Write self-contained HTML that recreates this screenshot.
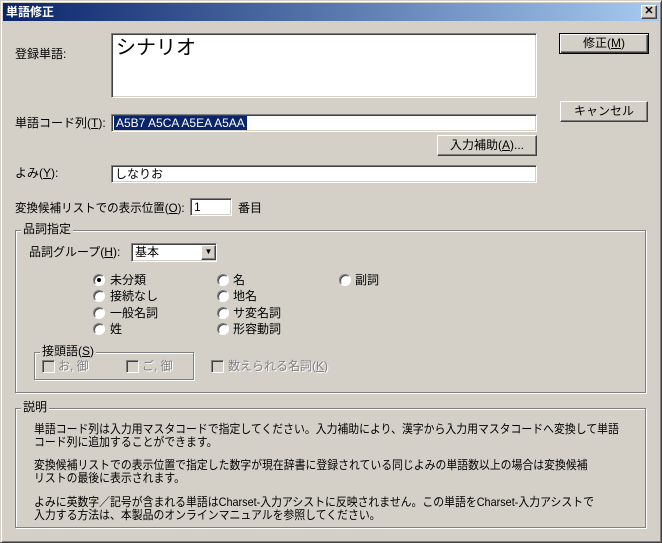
<!DOCTYPE html>
<html><head><meta charset="utf-8"><style>
*{margin:0;padding:0;box-sizing:border-box}
body{width:662px;height:543px;background:#d4d0c8;font:12px "Liberation Sans","Noto Sans CJK JP",sans-serif;color:#000;position:relative;overflow:hidden}
.a{position:absolute;white-space:nowrap;line-height:14px}
.win{position:absolute;left:0;top:0;width:662px;height:543px;border:1px solid;border-color:#d4d0c8 #404040 #404040 #d4d0c8;box-shadow:inset 1px 1px #fff,inset -1px -1px #808080}
.title{position:absolute;left:3px;top:3px;width:656px;height:18px;background:linear-gradient(90deg,#0a246a,#a6caf0);color:#fff;font-weight:bold;padding:2px 3px;line-height:14px}
.sunk{position:absolute;background:#fff;border:1px solid;border-color:#808080 #fff #fff #808080;box-shadow:inset 1px 1px #404040,inset -1px -1px #d4d0c8}
.btn{position:absolute;background:#d4d0c8;border:1px solid;border-color:#fff #404040 #404040 #fff;box-shadow:inset -1px -1px #808080;text-align:center;line-height:18px}
.grp{position:absolute;border:1px solid #808080;box-shadow:1px 1px #fff,inset 1px 1px #fff}
.lg{position:absolute;background:#d4d0c8;padding:0 2px;line-height:13px}
.r{position:absolute;width:12px;height:12px;border-radius:50%;background:#fff;border:1px solid;border-color:#808080 #fff #fff #808080;box-shadow:inset 1px 1px #404040}
.cb{position:absolute;width:13px;height:13px;border:1px solid;border-color:#808080 #fff #fff #808080;box-shadow:inset 1px 1px #404040;background:#d4d0c8}
.g{color:#808080;text-shadow:1px 1px #fff}
.d{transform:scaleX(0.905);transform-origin:0 0}
</style></head><body>
<div class="win"></div>
<div class="title">単語修正</div>
<div class="btn" style="left:641px;top:5px;width:16px;height:14px;line-height:11px;font-weight:bold;font-size:11px">✕</div>

<div class="a" style="left:15px;top:47px">登録単語:</div>
<div class="sunk" style="left:111px;top:33px;width:426px;height:65px"><span class="a" style="left:4px;top:2px;font-size:20px;line-height:24px">シナリオ</span></div>

<div class="btn" style="left:559px;top:33px;width:90px;height:21px;border:1px solid #000;box-shadow:inset 1px 1px #fff,inset -1px -1px #404040,inset -2px -2px #808080">修正(<u>M</u>)</div>
<div class="btn" style="left:560px;top:101px;width:88px;height:21px">キャンセル</div>

<div class="a" style="left:15px;top:116px">単語コード列(<u>T</u>):</div>
<div class="sunk" style="left:111px;top:114px;width:426px;height:18px"><span class="a" style="left:2px;top:1px;background:#0a246a;color:#fff;padding:0 2px">A5B7 A5CA A5EA A5AA</span></div>
<div class="btn" style="left:437px;top:135px;width:100px;height:21px">入力補助(<u>A</u>)...</div>

<div class="a" style="left:15px;top:166px">よみ(<u>Y</u>):</div>
<div class="sunk" style="left:111px;top:165px;width:426px;height:18px"><span class="a" style="left:3px;top:1px">しなりお</span></div>

<div class="a" style="left:15px;top:201px;transform:scaleX(0.96);transform-origin:0 0">変換候補リストでの表示位置(<u>O</u>):</div>
<div class="sunk" style="left:190px;top:198px;width:42px;height:18px"><span class="a" style="left:3px;top:1px">1</span></div>
<div class="a" style="left:238px;top:201px">番目</div>

<div class="grp" style="left:15px;top:230px;width:631px;height:163px"></div>
<div class="lg a" style="left:21px;top:223px">品詞指定</div>
<div class="a" style="left:29px;top:245px">品詞グループ(<u>H</u>):</div>
<div class="sunk" style="left:131px;top:243px;width:86px;height:19px"><span class="a" style="left:3px;top:1px">基本</span>
<div class="btn" style="left:69px;top:1px;width:15px;height:15px;line-height:12px;font-size:8px">▼</div></div>

<div class="r" style="left:93px;top:274px"><div style="position:absolute;left:3px;top:3px;width:4px;height:4px;border-radius:50%;background:#000"></div></div>
<div class="a" style="left:110px;top:273px">未分類</div>
<div class="r" style="left:93px;top:290px"></div><div class="a" style="left:110px;top:289px">接続なし</div>
<div class="r" style="left:93px;top:307px"></div><div class="a" style="left:110px;top:306px">一般名詞</div>
<div class="r" style="left:93px;top:323px"></div><div class="a" style="left:110px;top:322px">姓</div>
<div class="r" style="left:217px;top:274px"></div><div class="a" style="left:233px;top:273px">名</div>
<div class="r" style="left:217px;top:290px"></div><div class="a" style="left:233px;top:289px">地名</div>
<div class="r" style="left:217px;top:307px"></div><div class="a" style="left:233px;top:306px">サ変名詞</div>
<div class="r" style="left:217px;top:323px"></div><div class="a" style="left:233px;top:322px">形容動詞</div>
<div class="r" style="left:339px;top:274px"></div><div class="a" style="left:355px;top:273px">副詞</div>

<div class="grp" style="left:34px;top:352px;width:160px;height:28px"></div>
<div class="lg a" style="left:40px;top:345px">接頭語(<u>S</u>)</div>
<div class="cb" style="left:42px;top:360px"></div><div class="a g" style="left:58px;top:359px">お, 御</div>
<div class="cb" style="left:126px;top:360px"></div><div class="a g" style="left:142px;top:359px">ご, 御</div>
<div class="cb" style="left:211px;top:360px"></div><div class="a g" style="left:228px;top:359px">数えられる名詞(<u>K</u>)</div>

<div class="grp" style="left:15px;top:408px;width:631px;height:120px"></div>
<div class="lg a" style="left:21px;top:401px">説明</div>
<div class="a d" style="left:34px;top:423px;line-height:12.5px">単語コード列は入力用マスタコードで指定してください。入力補助により、漢字から入力用マスタコードへ変換して単語<br>コード列に追加することができます。</div>
<div class="a d" style="left:34px;top:459px;line-height:12.5px">変換候補リストでの表示位置で指定した数字が現在辞書に登録されている同じよみの単語数以上の場合は変換候補<br>リストの最後に表示されます。</div>
<div class="a d" style="left:34px;top:496px;line-height:12.5px">よみに英数字／記号が含まれる単語はCharset-入力アシストに反映されません。この単語をCharset-入力アシストで<br>入力する方法は、本製品のオンラインマニュアルを参照してください。</div>
</body></html>
